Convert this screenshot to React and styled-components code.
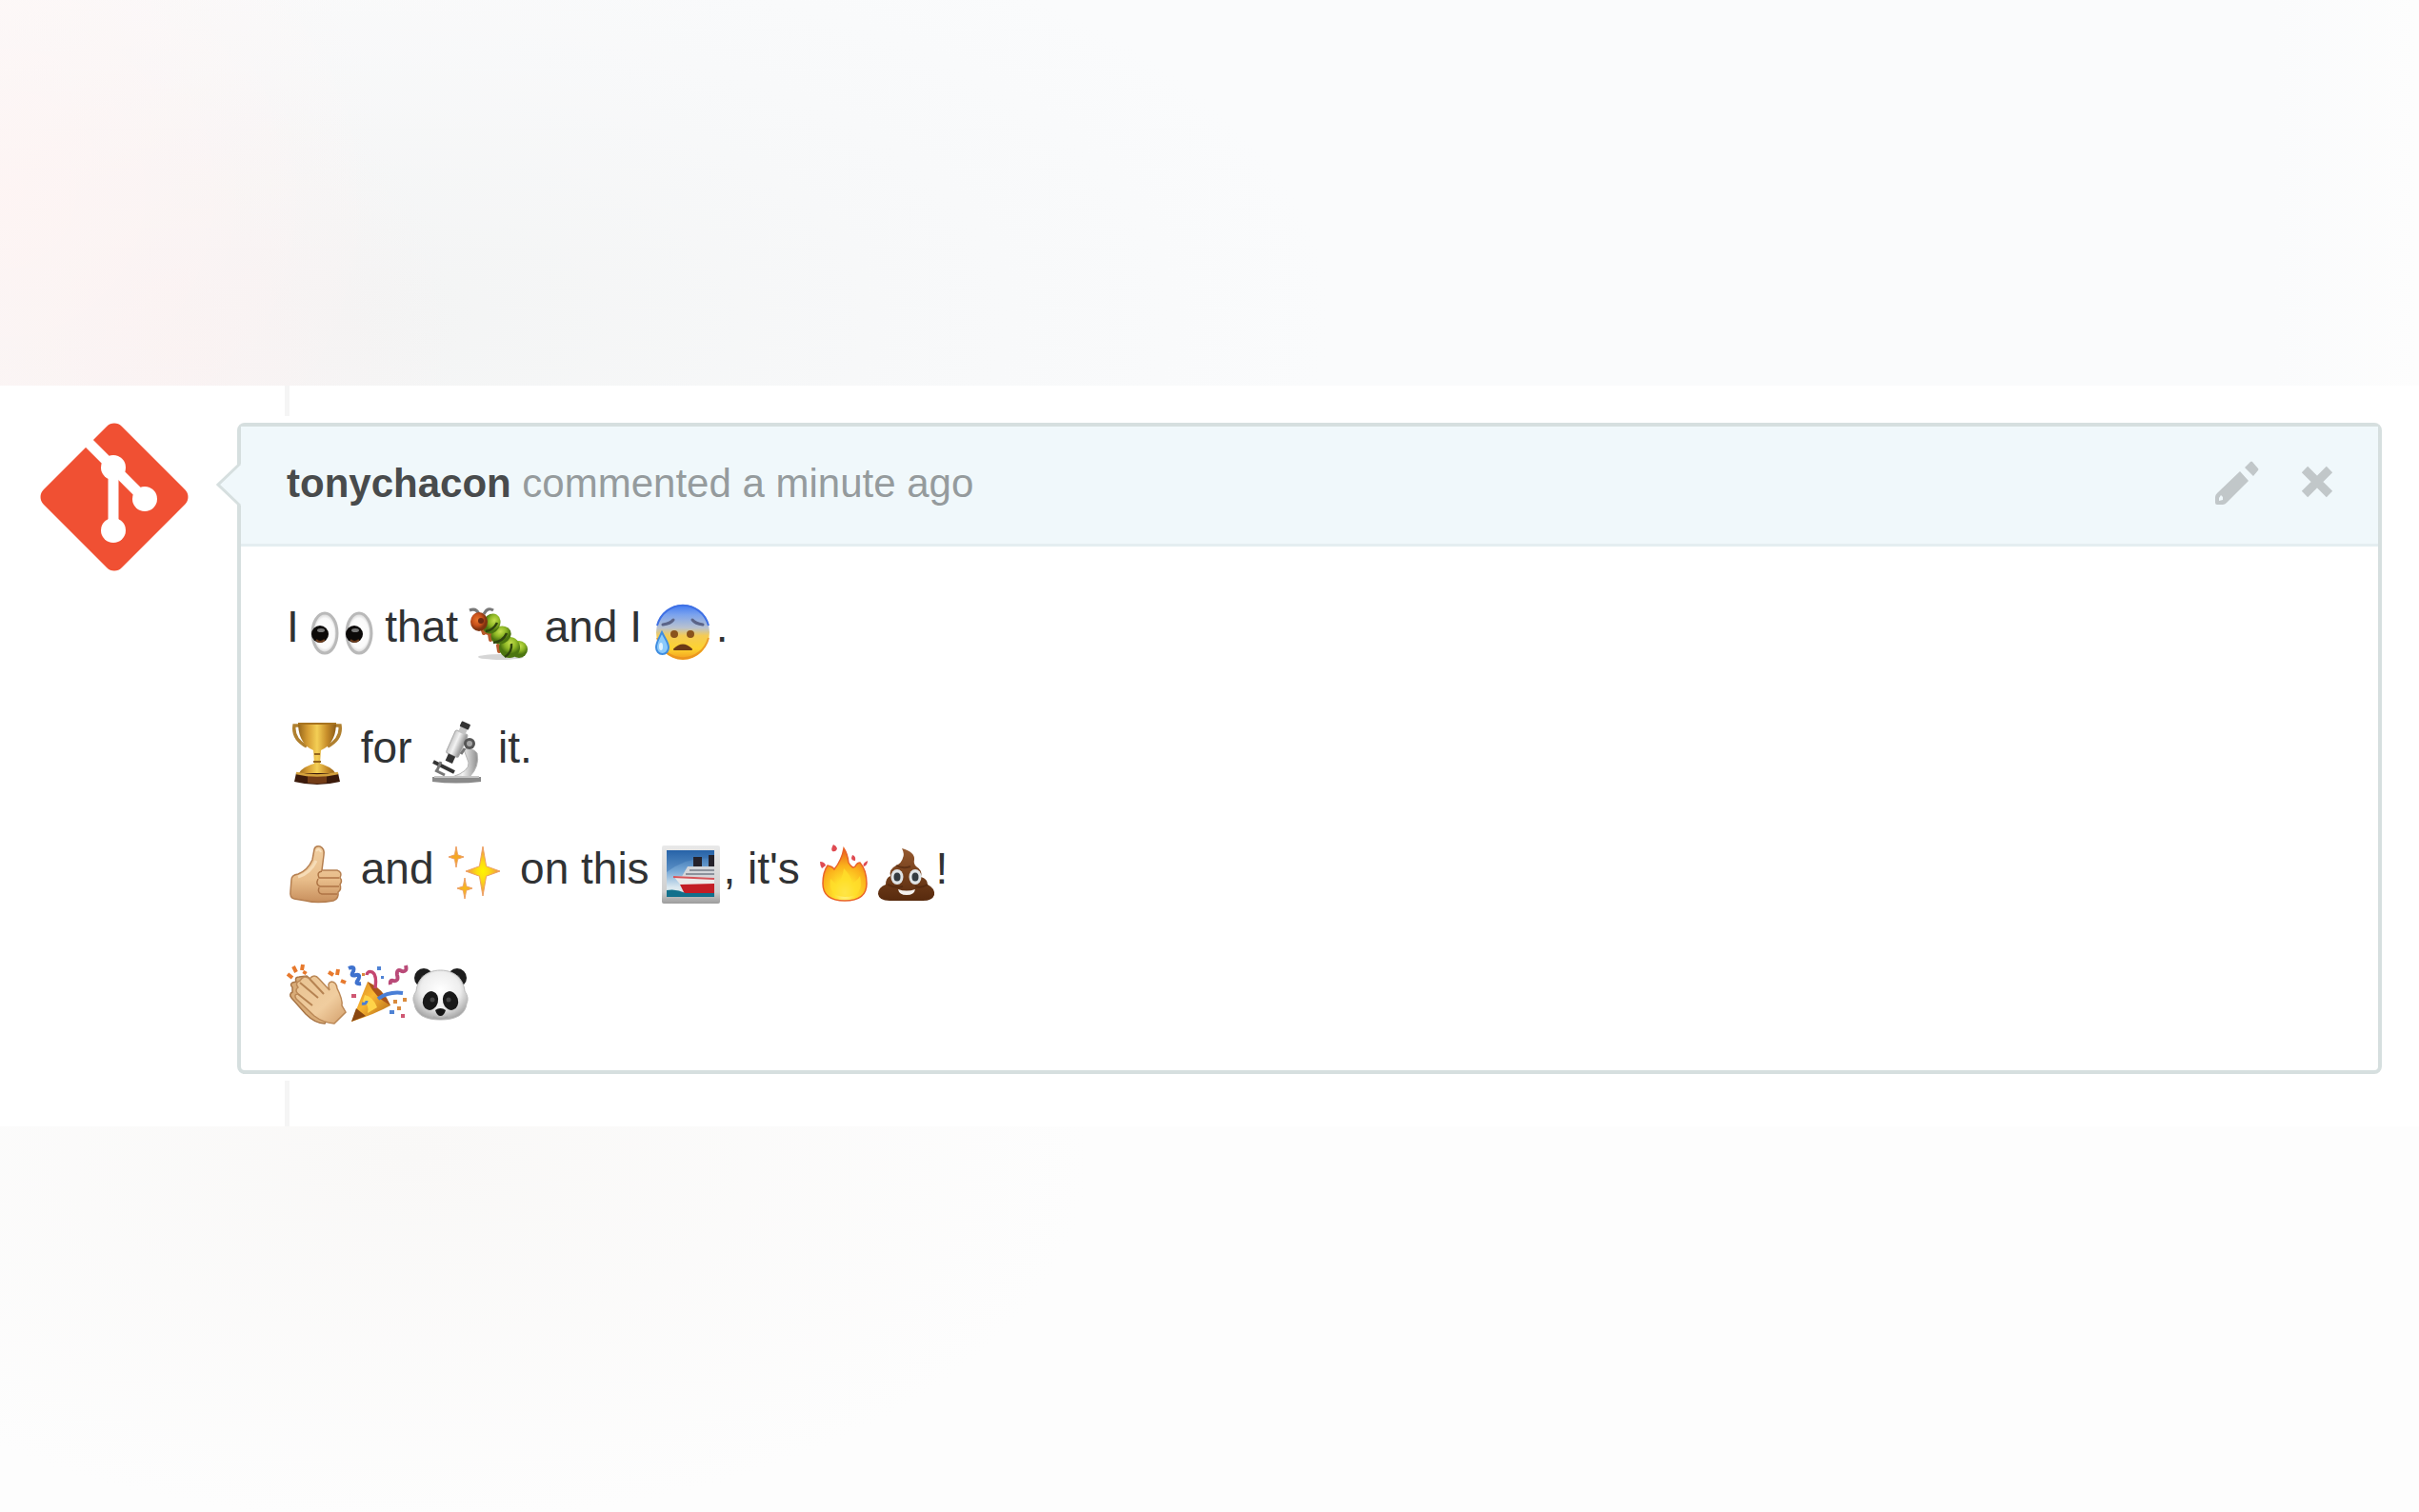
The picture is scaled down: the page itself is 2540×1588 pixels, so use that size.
import React from 'react';
import styled, { createGlobalStyle } from 'styled-components';

const GlobalStyle = createGlobalStyle`
  *, *::before, *::after { box-sizing: border-box; }
  body { margin: 0; background: #fff; }
`;

const Page = styled.div`
  min-height: 100vh;
  display: flex;
  flex-direction: column;
  font-family: "Liberation Sans", Arial, Helvetica, sans-serif;
  color: #333;
  background: #fff;
`;

const TopBand = styled.div`
  flex: 1;
  background:
    radial-gradient(ellipse 16% 100% at 0% 50%, rgba(255, 244, 243, 0.8), rgba(255, 244, 243, 0) 100%),
    radial-gradient(ellipse 12% 75% at 7% 90%, rgba(250, 241, 241, 0.7), rgba(250, 241, 241, 0) 100%),
    radial-gradient(ellipse 40% 115% at 15% 82%, #f3f4f4, rgba(246, 247, 248, 0.6) 60%, rgba(250, 251, 252, 0) 100%),
    linear-gradient(90deg, #fdfbfb 0%, #fafbfc 30%, #fafbfc 94%, #fdfdfd 100%);
`;

const BottomBand = styled.div`
  flex: 1;
  background:
    radial-gradient(ellipse 28% 95% at 17% 8%, #f9f8f7, rgba(253, 253, 253, 0) 100%),
    #fdfdfd;
`;

const Thread = styled.main`
  display: flex;
  align-items: flex-start;
  gap: 50px;
  padding: 0 39px 0 41px;
`;

const Avatar = styled.a`
  display: block;
  flex: none;
  width: 158px;
  height: 158px;
  margin-top: 38px;
`;

const Timeline = styled.div`
  flex: 1;
  min-width: 0;
  display: flex;
  flex-direction: column;
  gap: 7px;
`;

const Connector = styled.div`
  width: 5px;
  height: ${(p) => p.$length}px;
  margin-left: 50px;
  background: #f5f5f5;
`;

const Card = styled.article`
  position: relative;
  border: 4px solid #d6dfdf;
  border-radius: 8px;
  background: #fff;
`;

const Caret = styled.svg`
  position: absolute;
  left: -26px;
  top: 37px;
  width: 28px;
  height: 48px;
`;

const Header = styled.header`
  display: flex;
  align-items: center;
  justify-content: space-between;
  padding: 34px 47px 37px 48px;
  border-bottom: 3px solid #e4eef1;
  background: #f0f8fb;
  font-size: 42px;
  line-height: 48px;
  color: #959b9d;
`;

const Author = styled.a`
  font-weight: 700;
  color: #484b4c;
  text-decoration: none;
`;

const Actions = styled.div`
  display: flex;
  align-items: center;
  gap: 44px;
  padding-bottom: 4px;
`;

const IconButton = styled.button`
  display: block;
  padding: 0;
  border: 0;
  background: none;
  color: #c1c7c9;
  cursor: pointer;

  svg { display: block; }
`;

const Body = styled.div`
  display: flex;
  flex-direction: column;
  gap: 49px;
  padding: 45px 48px 46px;
`;

const Line = styled.p`
  margin: 0;
  font-size: 46px;
  line-height: 78px;
  color: #303234;
`;

const Glyph = styled.svg`
  display: inline-block;
  width: 65px;
  height: 65px;
  vertical-align: -23px;
  overflow: visible;
`;

function Emoji({ label, children }) {
  return (
    <Glyph viewBox="0 0 65 65" role="img" aria-label={label}>
      {children}
    </Glyph>
  );
}

function Gradient({ id, stops, radial, ...rest }) {
  const Tag = radial ? 'radialGradient' : 'linearGradient';
  const direction = radial ? {} : { x1: 0, y1: 0, x2: 0, y2: 1 };
  return (
    <Tag id={id} {...direction} {...rest}>
      {stops.map(([offset, color]) => (
        <stop key={offset} offset={offset} stopColor={color} />
      ))}
    </Tag>
  );
}

function GitLogo() {
  return (
    <svg viewBox="0 0 158 158" width="158" height="158" aria-hidden="true">
      <rect x="21" y="21" width="116" height="116" rx="11" fill="#f05033" transform="rotate(45 79 79)" />
      <g stroke="#fff" strokeWidth="11" fill="none">
        <path d="M43 13L78 48L111 81" />
        <path d="M78 48V114" />
      </g>
      <g fill="#fff">
        <circle cx="78" cy="48" r="13" />
        <circle cx="111" cy="81" r="13" />
        <circle cx="78" cy="114" r="13" />
      </g>
    </svg>
  );
}

function Eyes() {
  return (
    <Emoji label="eyes">
      <Gradient id="eye" radial stops={[[0, '#fff'], [0.75, '#fafafa'], [1, '#cfcfcf']]} />
      {[14, 50].map((x) => (
        <g key={x}>
          <ellipse cx={x} cy="33" rx="13" ry="21" fill="url(#eye)" stroke="#b9b9b9" strokeWidth="3" />
          <ellipse cx={x - 5} cy="34" rx="9" ry="9" fill="#0c0a09" />
          <path d={`M${x - 9} 40q4 4 9 0`} stroke="#6b3b1b" strokeWidth="2" fill="none" />
          <ellipse cx={x - 4} cy="30" rx="4" ry="2" fill="#777" />
        </g>
      ))}
    </Emoji>
  );
}

function Bug() {
  return (
    <Emoji label="bug">
      <Gradient id="bug" radial cx="0.55" cy="0.3" stops={[[0, '#c6e04e'], [0.55, '#8fb826'], [1, '#4c7510']]} />
      <Gradient id="bugHead" radial cx="0.4" cy="0.4" stops={[[0, '#e8762b'], [0.6, '#c8501a'], [1, '#7d3310']]} />
      <ellipse cx="32" cy="58" rx="24" ry="3" fill="#000" opacity="0.16" />
      <g transform="translate(-3 0)">
        <path d="M2 9q7-3 10 4M27 9q-6-4-10 4" stroke="#777" strokeWidth="3" fill="none" />
        <path d="M15 27l2 6M23 34l1 6M32 46l1 6M19 32l6 2" stroke="#b85a2b" strokeWidth="4" strokeLinecap="round" />
        <ellipse cx="54" cy="50" rx="9" ry="9" fill="url(#bug)" />
        <ellipse cx="44" cy="48" rx="11" ry="11" fill="url(#bug)" />
        <ellipse cx="35" cy="35" rx="11" ry="9" fill="url(#bug)" transform="rotate(-25 35 35)" />
        <ellipse cx="25" cy="23" rx="9" ry="11" fill="url(#bug)" transform="rotate(30 25 23)" />
        <path d="M19 31q8-1 12-9M27 43q10-1 14-10M39 58q8-5 7-14" stroke="#2f430e" strokeWidth="2.5" fill="none" />
        <ellipse cx="12" cy="21" rx="9" ry="10" fill="url(#bugHead)" />
        <circle cx="14" cy="20" r="3" fill="#6a2810" />
      </g>
    </Emoji>
  );
}

function ColdSweat() {
  return (
    <Emoji label="cold sweat">
      <Gradient
        id="sweat"
        stops={[[0, '#3f79f2'], [0.18, '#7aa2ee'], [0.42, '#b9c2cf'], [0.56, '#f4cb55'], [0.8, '#fdd32f'], [1, '#f29b1d']]}
      />
      <ellipse cx="30" cy="32" rx="28" ry="29" fill="url(#sweat)" />
      <path d="M3 25A28 29 0 0 1 57 25" stroke="#3f70e4" strokeWidth="2" fill="none" />
      <path d="M3 38A28 29 0 0 0 57 38" stroke="#e9901f" strokeWidth="2" fill="none" opacity="0.8" />
      <path d="M9 24q8-1 11-5M51 24q-8-1-11-5" stroke="#5b6488" strokeWidth="3" fill="none" strokeLinecap="round" />
      <ellipse cx="21" cy="34" rx="4" ry="4" fill="#8a531c" />
      <ellipse cx="38" cy="34" rx="4" ry="4" fill="#8a531c" />
      <path d="M21 50q9-9 18 0z" fill="#6b3a16" stroke="#6b3a16" strokeWidth="2" strokeLinejoin="round" />
      <path d="M8 32C4 40 2 43 2 48a6.500 7 0 0 0 13 0C15 43 12 40 8 32z" fill="#8ccafa" stroke="#3f8de0" strokeWidth="2" />
      <ellipse cx="7" cy="47" rx="2" ry="4" fill="#dff2ff" />
    </Emoji>
  );
}

function Trophy() {
  return (
    <Emoji label="trophy">
      <Gradient
        id="gold"
        x2="1"
        y2="0"
        stops={[[0, '#96661a'], [0.25, '#d59c33'], [0.5, '#f4cf55'], [0.75, '#c98f2b'], [1, '#8b5b17']]}
      />
      <path d="M15 3H8q-2 14 13 22M49 3h7q2 14-13 22" fill="none" stroke="#b0802f" strokeWidth="3.5" />
      <path d="M12 0H52C52 15 46 25 36 29L35 43H29L28 29C18 25 12 15 12 0z" fill="url(#gold)" />
      <path d="M12 1H52" stroke="#a87420" strokeWidth="2" />
      <path d="M29 33h6M28 41h8" stroke="#94651c" strokeWidth="2" />
      <path d="M12 54Q16 46 32 42Q48 46 52 54z" fill="url(#gold)" />
      <path d="M10 53H54L56 62Q32 68 8 62z" fill="#3b1a0b" />
      <path d="M22 54h20v9q-10 2-20 0z" fill="#743d17" />
      <path d="M10 53Q32 58 54 53" stroke="#d3a03c" strokeWidth="2.5" fill="none" />
    </Emoji>
  );
}

function Microscope() {
  return (
    <Emoji label="microscope">
      <Gradient id="tube" x2="1" y2="0" stops={[[0, '#c8c8c8'], [0.4, '#f3f3f3'], [1, '#8d8d8d']]} />
      <path d="M42 28q10-2 14 4q3 14-8 25H30q18-6 17-15z" fill="url(#tube)" stroke="#b5b5b5" />
      <path d="M9 57H60V62Q34 65 9 62z" fill="#8a8a8a" />
      <path d="M11 57H58" stroke="#c5c5c5" strokeWidth="2" />
      <g transform="rotate(24 34 24)">
        <rect x="27" y="9" width="14" height="26" rx="2" fill="url(#tube)" stroke="#aaa" />
        <rect x="30" y="2" width="8" height="8" fill="#c4c4c4" />
        <rect x="29" y="-2" width="10" height="6" rx="1" fill="#333" />
        <rect x="30" y="35" width="8" height="8" fill="#333" />
      </g>
      <circle cx="48" cy="22" r="6" fill="#555" />
      <circle cx="48" cy="22" r="3" fill="#a5a5a5" />
      <path d="M43 27l-4 6" stroke="#777" strokeWidth="3" />
      <path d="M10 41L32 52" stroke="#333" strokeWidth="4" />
      <path d="M12 50l10 5M18 41l-4 9" stroke="#777" strokeWidth="3" />
    </Emoji>
  );
}

function ThumbsUp() {
  return (
    <Emoji label="thumbs up">
      <Gradient id="thumb" stops={[[0, '#f1cfa2'], [0.6, '#e8bd8a'], [1, '#c88f5d']]} />
      <path
        d="M29 6Q30 2 35 3Q40 5 39 12L37 28H53Q59 30 56 36Q59 39 56 43Q58 48 54 51Q55 58 49 60Q32 63 20 60L8 58Q3 57 4 50L5 38Q5 33 12 32Q22 28 27 17Z"
        fill="url(#thumb)"
        stroke="#b57f50"
        strokeWidth="1.5"
      />
      <path d="M37 29Q31 30 34 36H55M33 37Q30 43 35 45H55M34 46Q32 52 37 53H53" stroke="#ae7445" strokeWidth="1.5" fill="none" />
      <path d="M31 8Q34 4 36 9" stroke="#f8e1bf" strokeWidth="2" fill="none" />
      <path d="M12 35Q25 31 31 18" stroke="#f6dcb7" strokeWidth="3" fill="none" />
    </Emoji>
  );
}

function Star({ x, y, w, h, fill }) {
  const a = w / 5;
  const b = h / 5;
  return (
    <path
      d={`M${x} ${y - h}L${x + a} ${y - b}L${x + w} ${y}L${x + a} ${y + b}L${x} ${y + h}L${x - a} ${y + b}L${x - w} ${y}L${x - a} ${y - b}Z`}
      fill={fill}
      stroke="#eda064"
      strokeWidth="1"
    />
  );
}

function Sparkles() {
  return (
    <Emoji label="sparkles">
      <Gradient id="spark" radial stops={[[0, '#fff500'], [0.35, '#fcdd12'], [1, '#ee8d4d']]} />
      <Star x={39} y={29} w={18} h={26} fill="url(#spark)" />
      <Star x={11} y={14} w={8} h={11} fill="#f5a723" />
      <Star x={20} y={47} w={8} h={11} fill="#f6b51f" />
    </Emoji>
  );
}

function Ship() {
  return (
    <Emoji label="ship">
      <Gradient id="sky" stops={[[0, '#2763a8'], [0.45, '#78a9d6'], [0.8, '#dce9f0'], [1, '#d5e5ea']]} />
      <Gradient id="frame" stops={[[0, '#e9e9e9'], [0.8, '#cfcfcf'], [1, '#9c9c9c']]} />
      <rect x="1" y="2" width="61" height="61" rx="2" fill="url(#frame)" />
      <rect x="6" y="7" width="50" height="49" fill="url(#sky)" />
      <path d="M6 7h50v9Q30 12 6 30z" fill="#2763a8" opacity="0.35" />
      <rect x="34" y="14" width="9" height="12" fill="#25222b" />
      <rect x="50" y="12" width="6" height="13" fill="#25222b" />
      <path d="M28 24H56V38H20z" fill="#d4d6da" />
      <path d="M30 28H56M26 32H56" stroke="#8c919b" strokeWidth="2" />
      <path d="M13 34L56 36V45H22z" fill="#eceaea" />
      <path d="M13 35L56 37" stroke="#d4545a" strokeWidth="2" />
      <path d="M20 43L56 42V53H25z" fill="#c31d25" />
      <path d="M6 49Q16 47 26 52L56 52V56H6z" fill="#12708c" />
    </Emoji>
  );
}

function Fire() {
  return (
    <Emoji label="fire">
      <Gradient id="flame" radial cx="0.5" cy="0.85" r="0.8" stops={[[0, '#fff79b'], [0.3, '#ffe02b'], [0.65, '#fbb11b'], [1, '#ea6a1e']]} />
      <path
        d="M33 5Q37 11 38 20Q42 27 45 24Q47 20 50 20Q57 28 57 42Q57 60 34 60Q11 60 11 42Q11 30 16 23Q21 24 23 27Q31 17 33 5Z"
        fill="url(#flame)"
        stroke="#ea6428"
        strokeWidth="1.5"
      />
      <path d="M33 26Q41 34 42 42Q48 38 50 34Q55 56 34 56Q16 55 19 37Q24 42 26 43Q32 36 33 26z" fill="#ffdf2b" opacity="0.75" />
      <path d="M22 1q3 1 4 4q-1 4-5 3q-2-2 1-7zM8 19q5 0 6 4l-4 3q-2-3-2-7zM42 12q4 1 3 6q-4 0-4-3zM58 18q0 5-4 6q-2-3 4-6z" fill="#df4b52" />
    </Emoji>
  );
}

function Poop() {
  return (
    <Emoji label="hankey">
      <Gradient id="poop" stops={[[0, '#965a30'], [0.5, '#75401c'], [1, '#572a0e']]} />
      <path
        d="M29 5Q43 9 42 17Q41 21 44 24Q51 28 49 35Q56 37 56 43Q64 47 63 54Q61 60 51 60H16Q5 60 4 53Q4 46 12 43Q12 36 17 34Q15 27 23 23Q29 20 30 15Q32 11 29 5Z"
        fill="url(#poop)"
      />
      <path d="M23 23Q30 27 38 24M14 43Q22 47 30 45M56 43Q50 47 43 45" stroke="#4b230b" strokeWidth="2" fill="none" opacity="0.6" />
      {[24, 43].map((x) => (
        <g key={x}>
          <ellipse cx={x} cy="35" rx="6.5" ry="8" fill="#dfe3e5" />
          <ellipse cx={x} cy="35" rx="3.5" ry="4.5" fill="#333b40" />
        </g>
      ))}
      <path d="M25 48Q34 51 43 48Q42 54 34 54Q26 54 25 48z" fill="#f4f1ee" />
    </Emoji>
  );
}

function Clap() {
  return (
    <Emoji label="clap">
      <Gradient id="palm" x2="1" stops={[[0, '#e9c392'], [0.6, '#f0cd9f'], [1, '#d39f6b']]} />
      <path
        d="M6 24Q3 21 6 19L10 18Q8 13 13 13L21 12L43 30L48 50L40 62Q30 62 20 52L5 35Q2 31 6 29Z"
        fill="#d8ab77"
        stroke="#a87546"
        strokeWidth="1.5"
      />
      <path
        d="M12 24Q8 19 14 17Q18 10 24 15Q29 9 34 15L45 27Q42 19 47 18Q52 18 53 25Q59 37 58 43L62 50L50 62Q38 61 29 54L10 36Q7 31 12 31Q8 27 12 24Z"
        fill="url(#palm)"
        stroke="#bb8856"
        strokeWidth="1.5"
      />
      <path d="M14 19L33 35M24 15L39 31M12 31L27 43" stroke="#b68352" strokeWidth="2" fill="none" />
      <path d="M1 10l5 4M7 2l3 6M17 0l-1 6M44 8l5 3M54 5l-1 6M57 17l5 2M20 7l-2 3" stroke="#e7792d" strokeWidth="4" />
    </Emoji>
  );
}

function Tada() {
  return (
    <Emoji label="tada">
      <Gradient id="cone" x2="1" y2="1" stops={[[0, '#d2811d'], [0.45, '#f9b632'], [1, '#a85c12']]} />
      <path d="M20 18Q37 26 44 43Q28 52 3 60Z" fill="url(#cone)" />
      <path d="M20 18Q37 26 44 43Q28 35 20 18z" fill="#a9541a" />
      <path d="M17 32Q26 34 30 45L20 51Q22 41 15 39z" fill="#ffd449" />
      <path d="M14 41q5 1 5-3" stroke="#4a7fd6" strokeWidth="3" fill="none" />
      <path d="M3 60L8 46L18 54z" fill="#8a4710" />
      <path d="M0 4q7-3 5 3q-4 6 3 4q5-1 2 5q-4 5 3 4" stroke="#3f72ce" strokeWidth="4" fill="none" />
      <path d="M60 1q2 7-4 6q-6-3-5 4q2 7-4 6q-4-1-3 4" stroke="#b94a78" strokeWidth="4" fill="none" />
      <path d="M19 11q1-5 6-3q5 3 3 17" stroke="#c5466f" strokeWidth="3.5" fill="none" />
      <path d="M31 36Q42 28 57 30" stroke="#4a7fd6" strokeWidth="4" fill="none" />
      <g fill="#d98b3d">
        <rect x="47" y="37" width="4" height="4" />
        <rect x="57" y="35" width="4" height="4" />
        <rect x="51" y="44" width="4" height="4" />
        <rect x="14" y="9" width="3" height="3" />
      </g>
      <g fill="#4f82d4">
        <rect x="30" y="2" width="4" height="4" />
        <rect x="43" y="48" width="5" height="4" />
        <rect x="34" y="12" width="3" height="3" />
      </g>
      <g fill="#cf5772">
        <rect x="3" y="31" width="5" height="4" />
        <rect x="55" y="52" width="4" height="4" />
      </g>
    </Emoji>
  );
}

function Panda() {
  return (
    <Emoji label="panda face">
      <Gradient id="panda" radial cx="0.5" cy="0.4" r="0.6" stops={[[0, '#fff'], [0.6, '#eeeeee'], [1, '#a8a8a8']]} />
      <circle cx="14" cy="14" r="10" fill="#1d1d1d" />
      <circle cx="49" cy="14" r="10" fill="#1d1d1d" />
      <circle cx="15" cy="15" r="4" fill="#555" />
      <circle cx="48" cy="15" r="4" fill="#555" />
      <path d="M31.5 6C48 6 56 17 57 28Q62 35 59 41Q57 58 31.500 58Q6 58 4 41Q1 35 6 28C7 17 15 6 31.500 6Z" fill="url(#panda)" stroke="#bdbdbd" />
      <ellipse cx="21" cy="38" rx="8" ry="10" fill="#191919" transform="rotate(16 21 38)" />
      <ellipse cx="42" cy="38" rx="8" ry="10" fill="#191919" transform="rotate(-16 42 38)" />
      <circle cx="23" cy="37" r="2.5" fill="#444" />
      <circle cx="40" cy="37" r="2.5" fill="#444" />
      <path d="M26 48Q31.500 44 37 48Q35 54 31.500 54Q28 54 26 48z" fill="#161616" />
      <path d="M24 55Q31.500 59 39 55" stroke="#aaa" strokeWidth="1.500" fill="none" />
    </Emoji>
  );
}

export default function App() {
  return (
    <Page>
      <GlobalStyle />
      <TopBand />
      <Thread>
        <Avatar href="#tonychacon" aria-label="tonychacon">
          <GitLogo />
        </Avatar>
        <Timeline>
          <Connector $length={32} />
          <Card>
            <Header>
              <div>
                <Author href="#tonychacon">tonychacon</Author> commented a minute ago
              </div>
              <Actions>
                <IconButton type="button" aria-label="Edit comment">
                  <svg width="47" height="48" viewBox="0 0 47 48" fill="currentColor">
                    <path d="M38 3Q39 2 40 3L46 10Q47 11 46 12L41 18L32 9Z" />
                    <path fillRule="evenodd" d="M27 13L36 23L13 46Q11 48 9 48H3Q1 48 1 46V40Q1 38 3 36ZM7 38L5 41V44L9 43V40Z" />
                  </svg>
                </IconButton>
                <IconButton type="button" aria-label="Delete comment">
                  <svg width="34" height="34" viewBox="0 0 34 34" stroke="currentColor" strokeWidth="9">
                    <path d="M4 4L30 30M30 4L4 30" />
                  </svg>
                </IconButton>
              </Actions>
            </Header>
            <Body>
              <Line>
                I <Eyes /> that <Bug /> and I <ColdSweat />.
              </Line>
              <Line>
                <Trophy /> for <Microscope /> it.
              </Line>
              <Line>
                <ThumbsUp /> and <Sparkles /> on this <Ship />, it's <Fire /><Poop />!
              </Line>
              <Line>
                <Clap /><Tada /><Panda />
              </Line>
            </Body>
            <Caret viewBox="0 0 28 48" aria-hidden="true">
              <path d="M28 0L2 24L28 48Z" fill="#f0f8fb" />
              <path d="M25 2L2 24L25 46" fill="none" stroke="#d6dfdf" strokeWidth="3" />
            </Caret>
          </Card>
          <Connector $length={48} />
        </Timeline>
      </Thread>
      <BottomBand />
    </Page>
  );
}
